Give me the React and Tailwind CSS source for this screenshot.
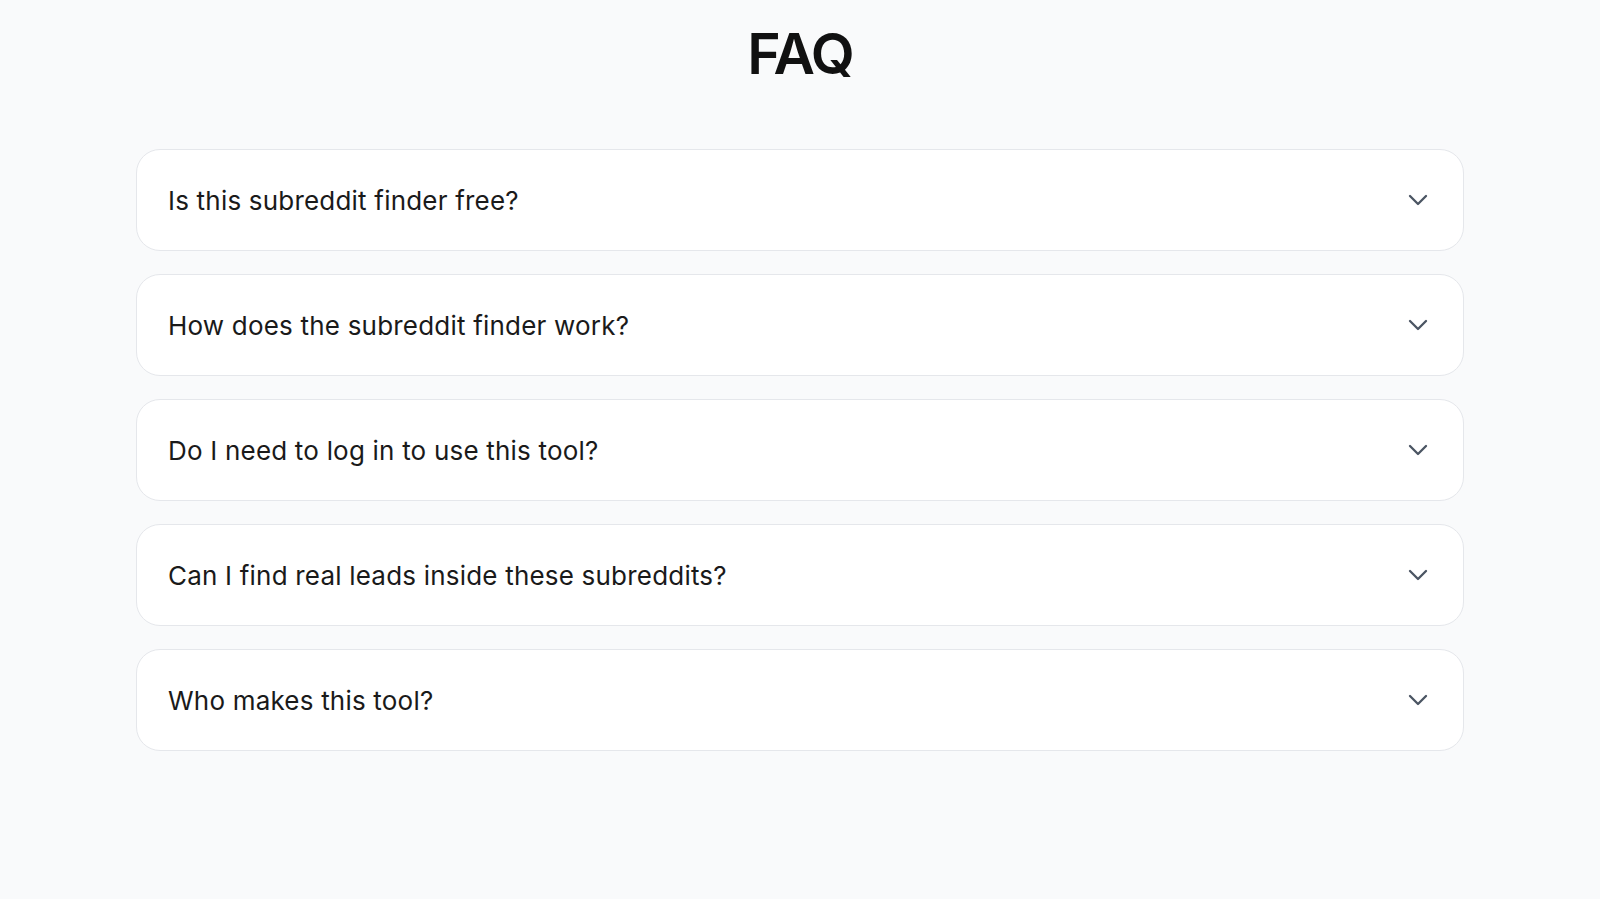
import { ChevronDown } from "lucide-react";

const questions = [
  "Is this subreddit finder free?",
  "How does the subreddit finder work?",
  "Do I need to log in to use this tool?",
  "Can I find real leads inside these subreddits?",
  "Who makes this tool?",
];

export default function App() {
  return (
    <div
      className="min-h-screen bg-[#f9fafb] text-[#111111]"
      style={{ fontFamily: "Inter, 'Noto Sans', sans-serif" }}
    >
      <div className="mx-auto w-[1328px] pt-[22px]">
        <h1 className="text-center text-[57px] leading-[64px] font-semibold tracking-[-0.035em]">
          FAQ
        </h1>

        <div className="mt-[63px] flex flex-col gap-[23px]">
          {questions.map((q) => (
            <button
              key={q}
              className="h-[102px] w-full flex items-center justify-between rounded-[24px] border border-[#e5e7eb] bg-white pl-[31px] pr-[29px] text-left"
            >
              <span className="text-[26px] tracking-[0.2px] text-[#1a1a1a]">{q}</span>
              <ChevronDown size={32} strokeWidth={1.75} className="text-[#4b5563]" />
            </button>
          ))}
        </div>
      </div>
    </div>
  );
}
